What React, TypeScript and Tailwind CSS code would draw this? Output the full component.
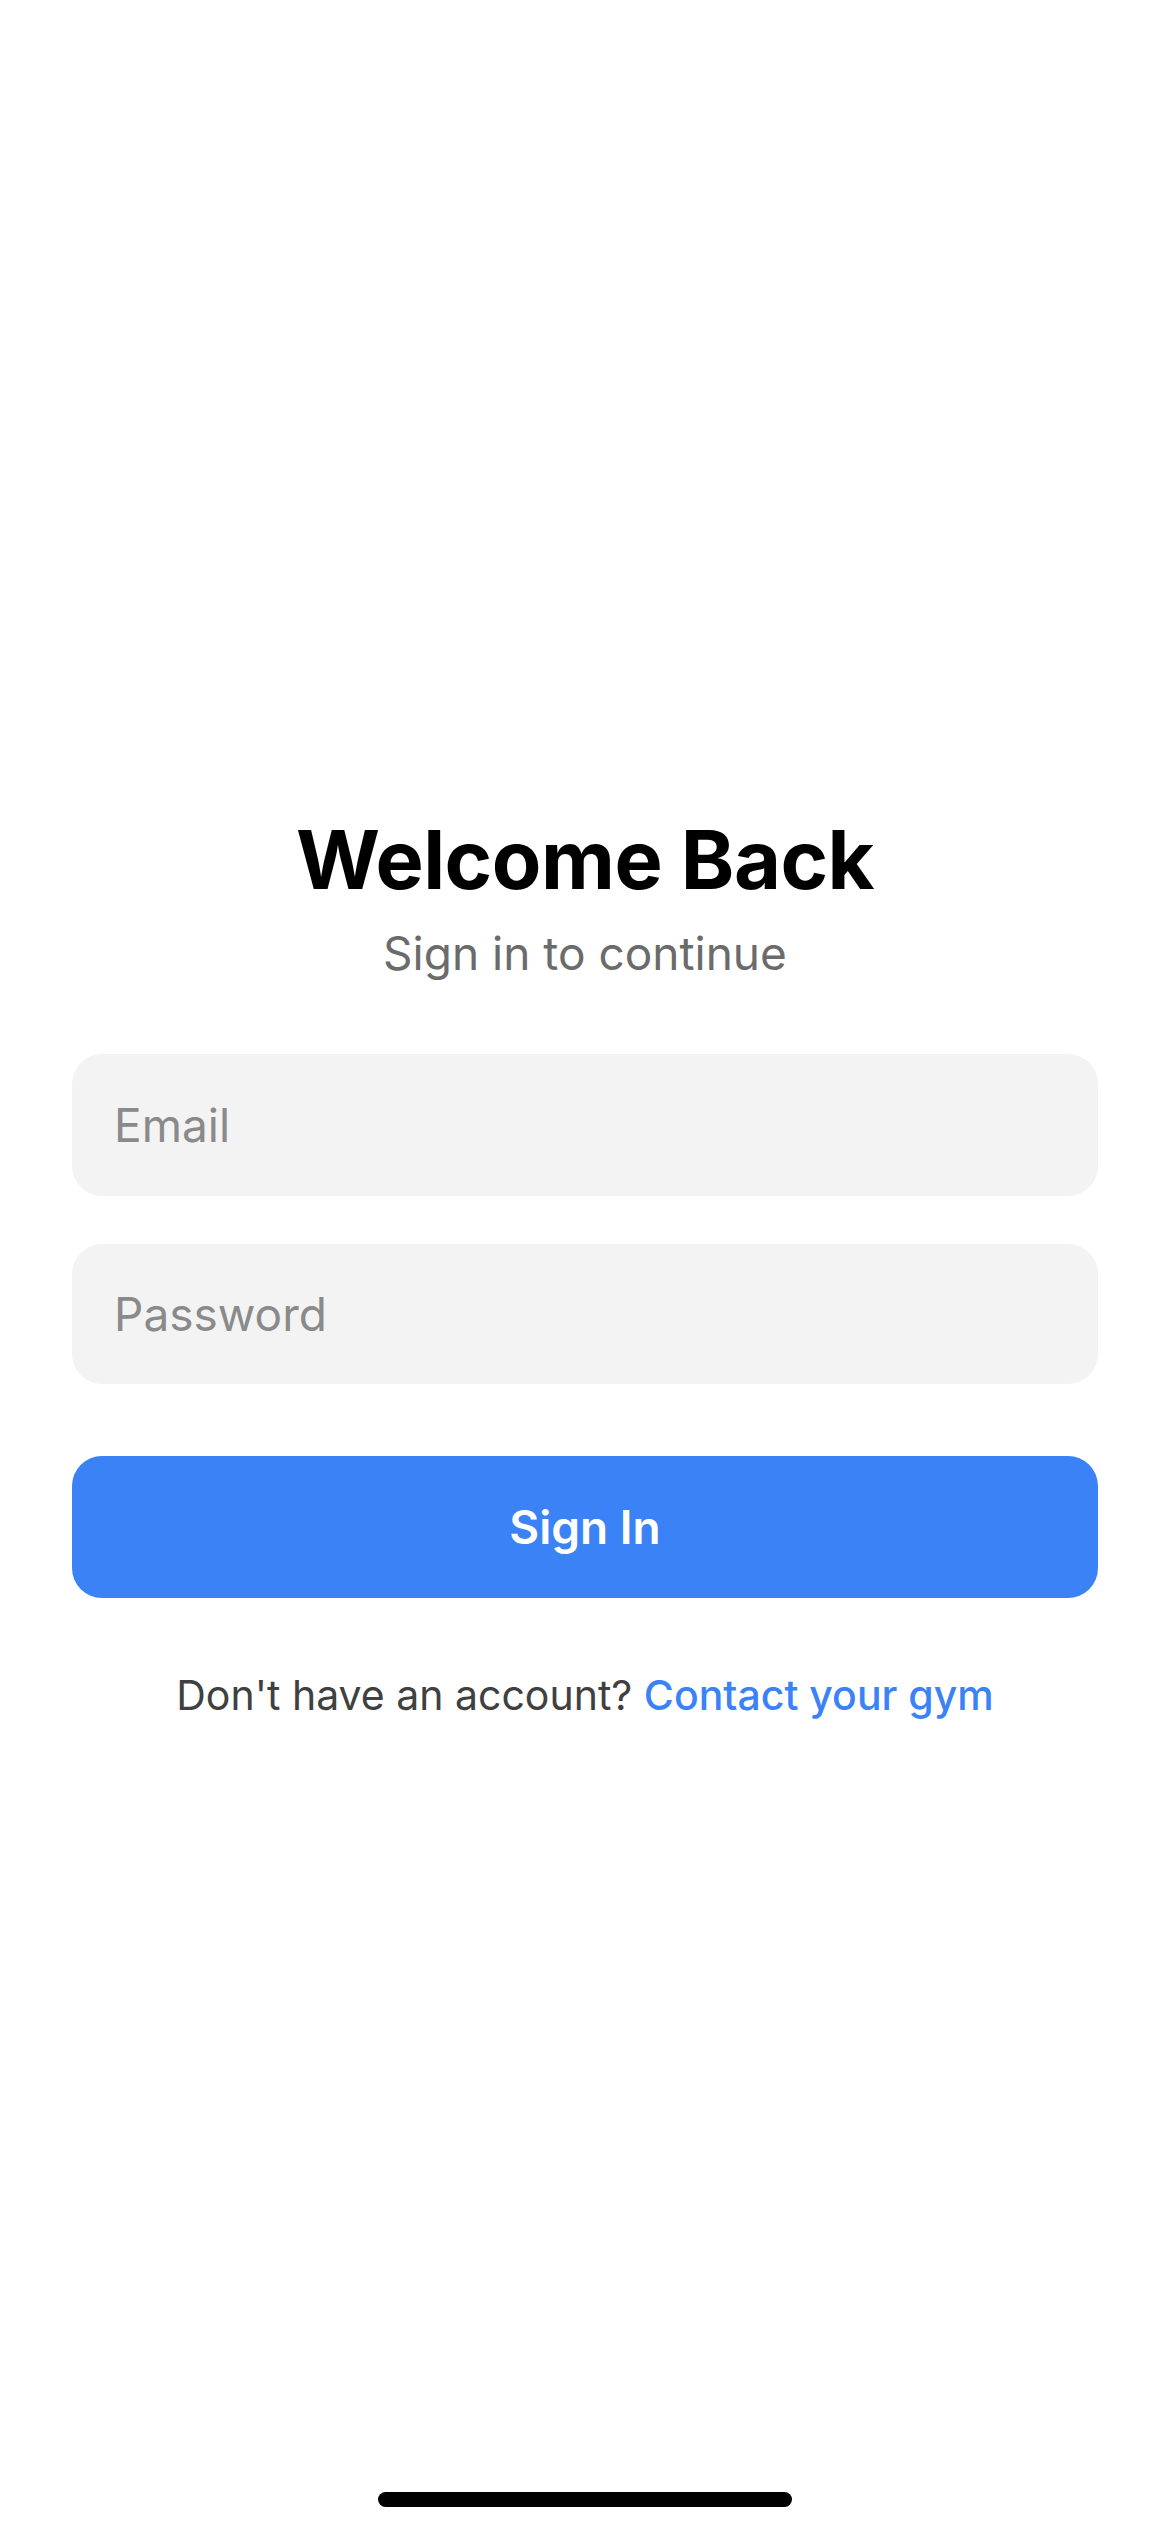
export default function App() {
  return (
    <div
      className="relative w-[1170px] h-[2532px] bg-white overflow-hidden"
      style={{ fontFamily: "Inter, 'Noto Sans', sans-serif" }}
    >
      <div className="flex flex-col px-[72px] pt-[820px]">
        <h1 className="text-center text-[81px] leading-none font-bold tracking-[-0.5px] text-black">
          Welcome Back
        </h1>
        <p className="mt-[29px] text-center text-[46px] leading-none text-[#6b6b6b]">
          Sign in to continue
        </p>

        <div className="mt-[78px] flex flex-col gap-[48px]">
          <input
            type="email"
            placeholder="Email"
            className="h-[142px] w-full rounded-[30px] bg-[#f3f3f3] px-[42px] text-[46px] text-black outline-none placeholder:text-[#8a8a8a]"
          />
          <input
            type="password"
            placeholder="Password"
            className="h-[140px] w-full rounded-[30px] bg-[#f3f3f3] px-[42px] text-[46px] text-black outline-none placeholder:text-[#8a8a8a]"
          />
        </div>

        <button className="mt-[72px] h-[142px] w-full rounded-[30px] bg-[#3b82f6] text-[46px] font-semibold text-white">
          Sign In
        </button>

        <p className="mt-[77px] text-center text-[41px] leading-none text-[#404040]">
          Don't have an account?{" "}
          <span className="font-medium text-[#3b82f6]">Contact your gym</span>
        </p>
      </div>

      <div className="absolute bottom-[25px] left-1/2 h-[15px] w-[414px] -translate-x-1/2 rounded-full bg-black" />
    </div>
  )
}
